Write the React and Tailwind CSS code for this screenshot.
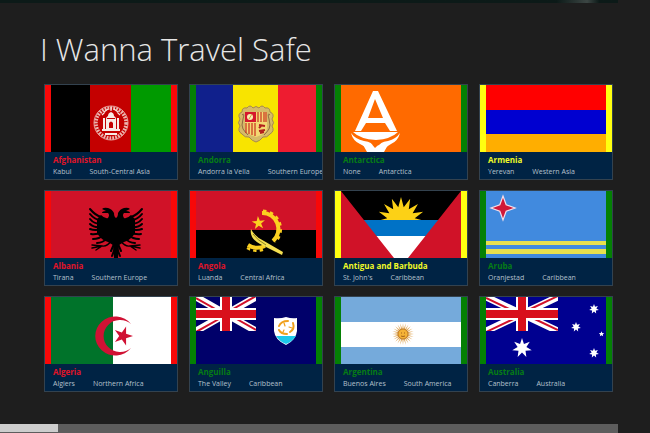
import React from 'react';

const starPoints = (cx, cy, outer, inner, tips, turn = -90) => {
    const pts = [];
    for (let i = 0; i < tips * 2; i++) {
        const r = i % 2 === 0 ? outer : inner;
        const a = ((turn + (i * 180) / tips) * Math.PI) / 180;
        pts.push(`${(cx + r * Math.cos(a)).toFixed(2)},${(cy + r * Math.sin(a)).toFixed(2)}`);
    }
    return pts.join(' ');
};

const Flag = ({ children }) => (
    <svg viewBox="0 0 120 67" className="block w-full h-auto" aria-hidden="true">
        {children}
    </svg>
);

// Union Jack canton, w by 34
const UnionJack = ({ w, blue }) => (
    <svg x="0" y="0" width={w} height="34" viewBox={`0 0 ${w} 34`}>
        <rect width={w} height="34" fill={blue} />
        <path d={`M0 0L${w} 34M${w} 0L0 34`} stroke="#fff" strokeWidth="7" />
        <path d={`M0 1L${w / 2} 18M${w} 33L${w / 2} 16M${w} -1L${w / 2} 16M0 35L${w / 2} 18`} stroke="#d0102a" strokeWidth="2" />
        <path d={`M${w / 2} 0V34M0 17H${w}`} stroke="#fff" strokeWidth="12" />
        <path d={`M${w / 2} 0V34M0 17H${w}`} stroke="#d8101c" strokeWidth="8" />
    </svg>
);

const Afghanistan = () => (
    <Flag>
        <rect width="40" height="67" fill="#000" />
        <rect x="39" width="41" height="67" fill="#c40000" />
        <rect x="80" width="40" height="67" fill="#009a00" />
        <g fill="none" stroke="#f6e3dc">
            <circle cx="60" cy="38" r="15" strokeWidth="3.4" strokeDasharray="1.8 1.1" opacity="0.8" />
            <circle cx="60" cy="38" r="17" strokeWidth="0.7" />
            <path d="M53 27L57 24M67 27L63 24M60 22V26M51 30L54 27M69 30L66 27" strokeWidth="1.2" />
        </g>
        <path d="M55 44V34Q55 32 57 31Q57 28 60 27Q63 28 63 31Q65 32 65 34V44Z" fill="#f8ece6" />
        <path d="M52 44V33H54V44ZM66 44V33H68V44ZM51 44H69V46H51ZM54 48H66V50H54Z" fill="#f8ece6" />
        <path d="M58 43V38Q60 35 62 38V43ZM56 33H64V34H56Z" fill="#c40000" />
    </Flag>
);

const Andorra = () => (
    <Flag>
        <rect width="38" height="67" fill="#10208c" />
        <rect x="37" width="46" height="67" fill="#f8e400" />
        <rect x="82" width="38" height="67" fill="#ee1c30" />
        <path
            d="M51 23Q54 19 57 23Q60 20 63 23Q66 19 69 23Q74 22 74 27Q79 29 76 34Q79 38 76 41Q79 46 74 49Q71 53 67 52Q64 56 60 57Q56 56 53 52Q49 53 46 49Q41 46 44 41Q41 38 44 34Q41 29 46 27Q46 22 51 23Z"
            fill="#d6ba68" stroke="#a5874f" strokeWidth="1"
        />
        <path d="M46 30Q49 27 47 34T47 44T52 50M74 30Q71 27 73 34T73 44T68 50" fill="none" stroke="#8e6c45" strokeWidth="1" />
        <path d="M49 27H71V43Q71 49 60 52Q49 49 49 43Z" fill="#f3d873" />
        <rect x="49" y="27" width="11" height="10" fill="#d6182c" />
        <circle cx="54" cy="32" r="3" fill="#f7eeb0" />
        <path d="M53 34L56 29" stroke="#cda33a" strokeWidth="1" />
        <path d="M62 27V37M65 27V37M68 27V37M70 27V37M50 38V48M53 38V49M56 38V50M59 38V51" stroke="#c9301f" strokeWidth="1.2" />
        <path d="M63 40L69 41M63 43L65 41M63 46L69 45M64 48L68 47" stroke="#b3201c" strokeWidth="2" />
    </Flag>
);

const Antarctica = () => (
    <Flag>
        <rect width="120" height="67" fill="#ff6a00" />
        <path d="M32 6H37L56 46H49L44 38H25L20 46H14ZM34 14L27 33H42Z" fill="#fff" fillRule="evenodd" />
        <path d="M12 47H57Q50 54 35 55Q19 54 12 47Z" fill="#fff" />
        <path d="M10 48Q14 54 23 56Q32 57 32 62V67H28Q26 62 19 59Q12 56 10 48Z" fill="#fff" />
        <path d="M59 48Q55 54 47 56Q38 57 38 62V67H42Q44 62 50 59Q57 56 59 48Z" fill="#fff" />
        <path d="M21 58Q31 58 34 63V67H26ZM48 58Q38 58 34 63V67H43Z" fill="#fff" />
    </Flag>
);

const Armenia = () => (
    <Flag>
        <rect width="120" height="25" fill="#ff0000" />
        <rect y="25" width="120" height="24" fill="#0000d0" />
        <rect y="49" width="120" height="18" fill="#ffae00" />
    </Flag>
);

const EagleHalf = () => (
    <g>
        <path d="M0 27Q-2 26 -2 22Q-4 18 -8 17Q-12 16 -14 18L-10 20Q-14 20 -14 22L-8 22Q-6 24 -8 27Q-11 28 -15 24L-19 28V42Q-15 49 -8 51L-3 54L-2 67H0Z" />
        <g fill="none" stroke="#000" strokeLinecap="round" strokeWidth="2">
            <path d="M-15 26Q-21 24 -26 18" />
            <path d="M-15 30Q-22 28 -26 23" />
            <path d="M-15 33Q-22 33 -26 28" />
            <path d="M-15 36Q-22 37 -26 33" />
            <path d="M-14 38Q-21 40 -26 38" />
            <path d="M-13 41Q-20 44 -25 43" />
            <path d="M-12 44Q-17 48 -23 48" />
            <path d="M-9 47Q-13 52 -19 52" />
            <path d="M-5 50Q-9 56 -14 55L-24 54M-14 55L-20 59M-14 55L-24 57" strokeWidth="1.4" />
            <path d="M-2 53L-5 60M-1 57L-4 65" />
        </g>
    </g>
);

const Albania = () => (
    <Flag>
        <rect width="120" height="67" fill="#d01228" />
        <g transform="translate(65 0)"><EagleHalf /></g>
        <g transform="translate(65 0) scale(-1 1)"><EagleHalf /></g>
    </Flag>
);

const Angola = () => (
    <Flag>
        <rect width="120" height="39" fill="#d01228" />
        <rect y="39" width="120" height="28" fill="#000" />
        <g fill="none" stroke="#fbd020">
            <path d="M66 22A16 16 0 0 1 77 50" strokeWidth="4" />
            <path d="M67 20A18 18 0 0 1 79 51" strokeWidth="3" strokeDasharray="3.4 3.6" />
            <path d="M52 54Q60 59 69 55" strokeWidth="4" />
            <path d="M51 57Q60 62 69 58" strokeWidth="2.5" strokeDasharray="3.4 3.2" />
        </g>
        <polygon points={starPoints(62.5, 32, 7, 2.7, 5, -95)} fill="#fbd020" />
        <path d="M55 38Q58 45 68 50L87 61L86 64L80 61L64 53Q53 47 55 38Z" fill="#f4df50" />
        <path d="M57 43Q61 49 70 54" fill="none" stroke="#8e8420" strokeWidth="1" />
    </Flag>
);

const Antigua = () => (
    <Flag>
        <rect width="120" height="67" fill="#000" />
        <polygon points={starPoints(60, 30, 24, 14, 16)} fill="#fcd116" />
        <rect y="29" width="120" height="17" fill="#0072c6" />
        <rect y="45" width="120" height="22" fill="#fff" />
        <path d="M0 0L53 67H0ZM120 0L67 67H120Z" fill="#d01228" />
    </Flag>
);

const Aruba = () => (
    <Flag>
        <rect width="120" height="67" fill="#418ade" />
        <polygon points={starPoints(17, 17, 12, 4.5, 4)} fill="#d01838" stroke="#f3dfea" strokeWidth="1.2" />
        <rect y="50" width="120" height="4" fill="#e8e04e" />
        <rect y="58" width="120" height="5" fill="#e8e04e" />
    </Flag>
);

const Algeria = () => (
    <Flag>
        <rect width="62" height="67" fill="#00732a" />
        <rect x="62" width="58" height="67" fill="#fff" />
        <path d="M80 27A20 19.5 0 1 0 80 51A16.5 16 0 1 1 80 27Z" fill="#d01234" />
        <polygon points={starPoints(72, 39, 10, 3.8, 5, 0)} fill="#d01234" />
    </Flag>
);

const Anguilla = () => (
    <Flag>
        <rect width="120" height="67" fill="#00006a" />
        <UnionJack w={60} blue="#00006a" />
        <path d="M78 21Q84 22 90 20Q96 22 101 21V34Q100 43 90 48Q79 43 78 34Z" fill="#fff" />
        <path d="M80 39H100Q97 44 90 47Q83 44 80 39Z" fill="#1cc8ea" />
        <g fill="none" stroke="#f0a01c" strokeLinecap="round">
            <path d="M83 29Q85 24 92 24" strokeWidth="2" />
            <path d="M97 26Q99 32 94 35" strokeWidth="2" />
            <path d="M91 37Q85 37 83 33" strokeWidth="2" />
            <path d="M88 26L89 29M96 31L93 30M87 35L88 33" strokeWidth="1.2" />
        </g>
    </Flag>
);

const Argentina = () => (
    <Flag>
        <rect width="120" height="67" fill="#75aadb" />
        <rect y="25" width="120" height="25" fill="#fff" />
        <polygon points={starPoints(62, 37, 11, 5, 24)} fill="#e0a95c" />
        <circle cx="62" cy="37" r="5" fill="#f5b236" stroke="#a8651c" strokeWidth="0.7" />
        <path d="M60 36H61M63 36H64M60 39Q62 40 64 39" fill="none" stroke="#8e4e14" strokeWidth="0.8" />
    </Flag>
);

const Australia = () => (
    <Flag>
        <rect width="120" height="67" fill="#000090" />
        <UnionJack w={72} blue="#000090" />
        <g fill="#fff">
            <polygon points={starPoints(36, 51, 10, 4.5, 7)} />
            <polygon points={starPoints(108, 12, 5, 2.4, 7)} />
            <polygon points={starPoints(90, 30, 5, 2.4, 7)} />
            <polygon points={starPoints(108, 56, 5, 2.4, 7)} />
            <polygon points={starPoints(115.5, 37, 2.8, 1.3, 5)} />
        </g>
    </Flag>
);

const levels = {
    danger: { bar: 'bg-[#f80808]', name: 'text-[#e01428]' },
    caution: { bar: 'bg-[#ffff10]', name: 'text-[#f0fa28]' },
    safe: { bar: 'bg-[#048004]', name: 'text-[#067c14]' },
};

const countries = [
    { name: 'Afghanistan', capital: 'Kabul', region: 'South-Central Asia', level: 'danger', flag: Afghanistan },
    { name: 'Andorra', capital: 'Andorra la Vella', region: 'Southern Europe', level: 'safe', flag: Andorra },
    { name: 'Antarctica', capital: 'None', region: 'Antarctica', level: 'safe', flag: Antarctica },
    { name: 'Armenia', capital: 'Yerevan', region: 'Western Asia', level: 'caution', flag: Armenia },
    { name: 'Albania', capital: 'Tirana', region: 'Southern Europe', level: 'danger', flag: Albania },
    { name: 'Angola', capital: 'Luanda', region: 'Central Africa', level: 'danger', flag: Angola },
    { name: 'Antigua and Barbuda', capital: "St. John's", region: 'Caribbean', level: 'caution', flag: Antigua },
    { name: 'Aruba', capital: 'Oranjestad', region: 'Caribbean', level: 'safe', flag: Aruba },
    { name: 'Algeria', capital: 'Algiers', region: 'Northern Africa', level: 'danger', flag: Algeria },
    { name: 'Anguilla', capital: 'The Valley', region: 'Caribbean', level: 'safe', flag: Anguilla },
    { name: 'Argentina', capital: 'Buenos Aires', region: 'South America', level: 'safe', flag: Argentina },
    { name: 'Australia', capital: 'Canberra', region: 'Australia', level: 'safe', flag: Australia },
];

const CountryCard = ({ country }) => {
    const level = levels[country.level];
    const CountryFlag = country.flag;
    return (
        <a href="#" className="block overflow-hidden border border-[#33424f] bg-[#002344]">
            <div className={`px-[6px] ${level.bar}`}>
                <CountryFlag />
            </div>
            <div className="h-[27px] pl-2 pt-[2px] whitespace-nowrap">
                <h2 className={`text-[8px] leading-[12px] font-bold ${level.name}`}>{country.name}</h2>
                <p className="flex gap-[18px] text-[7px] leading-[12px] text-[#b4c0cc]">
                    <span>{country.capital}</span>
                    <span>{country.region}</span>
                </p>
            </div>
        </a>
    );
};

const App = () => {
    return (
        <div className="flex flex-col min-h-screen bg-[#1e1e1e] font-['Open_Sans','Noto_Sans',sans-serif]">
            {/* Edge of the picture behind the page */}
            <div className="h-[3px] mr-8 bg-gradient-to-r from-[#0c1a18] from-90% via-[#3c4644] via-95% to-[#0c1a18] to-97%"></div>
            <main className="flex-1 pl-11 pr-[37px] pt-6 pb-6">
                <h1 className="-ml-1 mb-[13px] text-[31px] leading-[44px] font-light text-[#e6e6e6]">I Wanna Travel Safe</h1>
                <div className="grid grid-cols-4 gap-x-[11px] gap-y-[10px]">
                    {countries.map((country) => (
                        <CountryCard key={country.name} country={country} />
                    ))}
                </div>
            </main>
            {/* Horizontal scrollbar */}
            <div className="h-[9px] mr-8 bg-[#5d5d5d]">
                <div className="w-[58px] h-2 bg-[#cdcdcd]"></div>
            </div>
        </div>
    );
};

export default App;
